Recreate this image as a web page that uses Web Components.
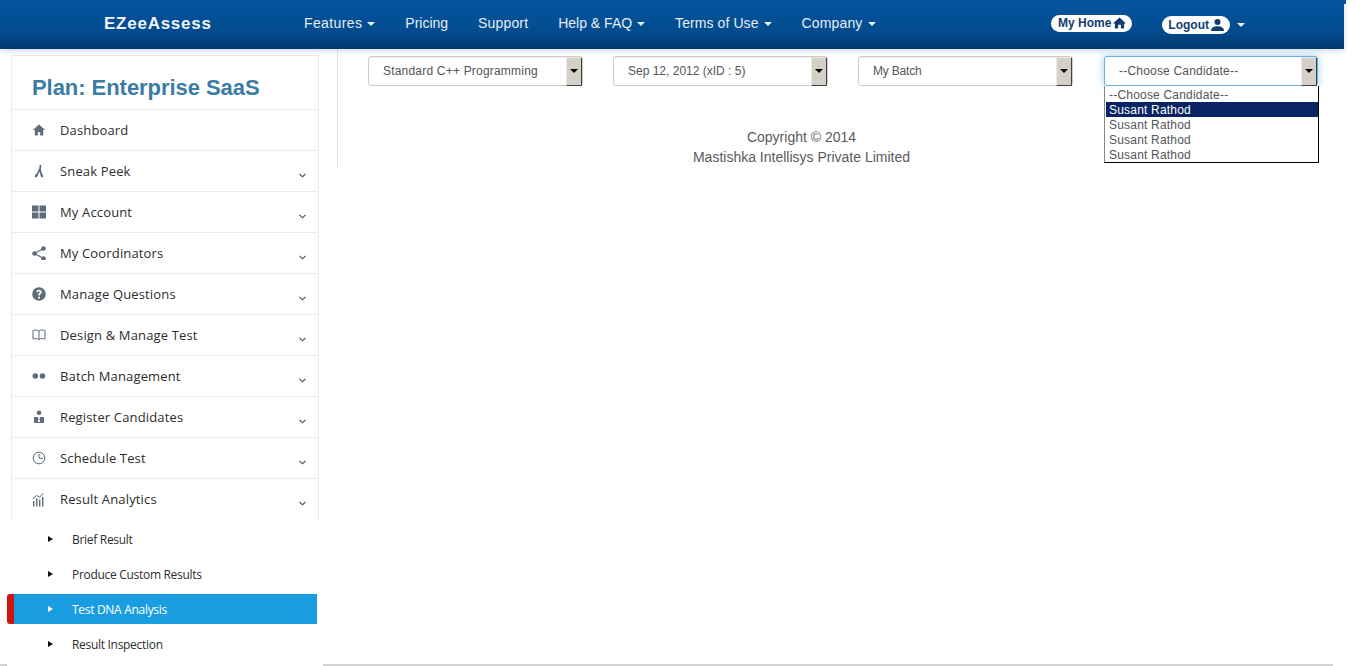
<!DOCTYPE html>
<html>
<head>
<meta charset="utf-8">
<title>EZeeAssess</title>
<style>
    html, body { margin: 0; height: 666px; overflow: hidden; background: #fff; }
    body { font-family: "Liberation Sans", Arial, sans-serif; }
    app-shell { height: 666px; }
</style>
</head>
<body>
<app-shell>
    <top-bar slot="top">
        <nav-link label="Features" caret style="letter-spacing: .38px"></nav-link>
        <nav-link label="Pricing"></nav-link>
        <nav-link label="Support" style="letter-spacing: .15px"></nav-link>
        <nav-link label="Help &amp; FAQ" caret></nav-link>
        <nav-link label="Terms of Use" caret style="letter-spacing: .08px"></nav-link>
        <nav-link label="Company" caret style="letter-spacing: .15px"></nav-link>
    </top-bar>
    <side-menu slot="side" title="Plan: Enterprise SaaS">
        <side-item icon="home" label="Dashboard" plain></side-item>
        <side-item icon="fork" label="Sneak Peek"></side-item>
        <side-item icon="grid" label="My Account"></side-item>
        <side-item icon="share" label="My Coordinators"></side-item>
        <side-item icon="help" label="Manage Questions"></side-item>
        <side-item icon="book" label="Design &amp; Manage Test"></side-item>
        <side-item icon="dots" label="Batch Management"></side-item>
        <side-item icon="person" label="Register Candidates"></side-item>
        <side-item icon="clock" label="Schedule Test"></side-item>
        <side-item icon="chart" label="Result Analytics" last></side-item>
        <sub-item slot="sub" label="Brief Result"></sub-item>
        <sub-item slot="sub" label="Produce Custom Results"></sub-item>
        <sub-item slot="sub" label="Test DNA Analysis" active></sub-item>
        <sub-item slot="sub" label="Result Inspection"></sub-item>
    </side-menu>
    <filter-bar slot="main">
        <pick-box value="Standard C++ Programming" style="letter-spacing: .2px"></pick-box>
        <pick-box value="Sep 12, 2012 (xID : 5)"></pick-box>
        <pick-box value="My Batch" style="letter-spacing: -.2px"></pick-box>
        <pick-box value="--Choose Candidate--" open selected="1" style="letter-spacing: .2px; width: 214px; margin-left: 1px">
            <span>--Choose Candidate--</span>
            <span>Susant Rathod</span>
            <span>Susant Rathod</span>
            <span>Susant Rathod</span>
            <span>Susant Rathod</span>
        </pick-box>
    </filter-bar>
    <copy-right slot="main"></copy-right>
</app-shell>

<script>
const ICONS = {
    home: '<path d="M7 1.500 .8 7h2v5.500h3V9h2.400v3.500h3V7h2z"/>',
    fork: '<path d="M8.600 1 8 5 4 12.800M8 5 9.800 12.800" fill="none" stroke="currentColor" stroke-width="1.700"/><path d="M3 13.200 3.300 10 5.500 10.800 5 13.200zM9 13.200 8.800 10 10.600 10 11 13.200z"/>',
    grid: '<path d="M0 .5h6.500v6H0zM7.500 .5H14v6H7.500zM0 7.500h6.500v6H0zM7.500 7.500H14v6H7.500z"/>',
    share: '<circle cx="11.500" cy="2.500" r="2.300"/><circle cx="2.500" cy="7.500" r="2.300"/><circle cx="11.500" cy="12.500" r="2.300"/><path d="M2.500 7.500 11.500 2.500M2.500 7.500 11.500 12.500" stroke="currentColor" stroke-width="1.200" fill="none"/>',
    help: '<path fill-rule="evenodd" d="M7 .2a6.800 6.800 0 1 0 0 13.600A6.800 6.800 0 0 0 7 .2zM6 9.700h2V11.500H6zM4.300 5.200C4.500 3.600 5.600 2.800 7.100 2.800c1.600 0 2.700 1 2.700 2.300 0 1.100-.6 1.600-1.300 2.100-.5.4-.7.600-.7 1.400H6c0-1.300.3-1.800 1-2.300.6-.5.900-.7.900-1.200 0-.5-.4-.8-.9-.8-.6 0-1 .3-1.100 1z"/>',
    book: '<path d="M7 3C5.500 1.800 3 1.800 1 2.500v8.500c2-.6 4.500-.6 6 .5 1.500-1.100 4-1.100 6-.5V2.500C11 1.800 8.500 1.800 7 3zm0 0v8.500" fill="none" stroke="currentColor" stroke-width="1"/>',
    dots: '<circle cx="3.300" cy="7" r="2.800"/><circle cx="10.500" cy="7" r="2.800"/>',
    person: '<circle cx="7" cy="2.800" r="2.300"/><path d="M2 13V7h3.500L6.500 8.500 6 12h2L7.500 8.500 8.500 7H12v6z"/>',
    clock: '<circle cx="7" cy="7" r="5.800" fill="none" stroke="currentColor" stroke-width="1"/><path d="M7 3V7.300H11" fill="none" stroke="currentColor" stroke-width="1"/>',
    chart: '<path d="M1 13.500V8H2.400V13.500zM4 13.500V5.500H5.400V13.500zM7 13.500V6.500H8.400V13.500zM10 13.500V4H11.400V13.500z"/><path d="M.8 6 4.500 2.500 7.500 4 11.500 .5" fill="none" stroke="currentColor" stroke-width="1"/>'
};

class AppShell extends HTMLElement {
    constructor() {
        super();
        this.attachShadow({ mode: "open" });
        this.shadowRoot.innerHTML = /* html */ `
            <style>
                :host { display: flex; flex-direction: column; }
                .body { flex: 1; display: flex; min-height: 0; }
                .side { flex: 0 0 323px; height: 617px; display: flex; flex-direction: column; }
                .stub { margin-top: auto; width: 7px; height: 2px; background: #d2d2d2; }
                .main { flex: 0 0 1010px; border-bottom: 2px solid #d2d2d2; box-sizing: border-box; height: 617px; padding-left: 14px; }
                .inner { border-left: 1px solid #e2e2e2; height: 118px; }
            </style>
            <slot name="top"></slot>
            <div class="body">
                <div class="side"><slot name="side"></slot><div class="stub"></div></div>
                <div class="main"><div class="inner"><slot name="main"></slot></div></div>
            </div>
        `;
    }
}

class TopBar extends HTMLElement {
    constructor() {
        super();
        this.attachShadow({ mode: "open" });
        this.shadowRoot.innerHTML = /* html */ `
            <style>
                :host { display: block; height: 49px; position: relative; }
                :host::after {
                    content: "";
                    position: absolute;
                    left: 1344px; top: 0;
                    width: 2px; height: 4px;
                    background: #04549f;
                }
                .bar {
                    width: 1344px;
                    height: 49px;
                    box-sizing: border-box;
                    display: flex;
                    align-items: center;
                    background: linear-gradient(to bottom, #04559f 0, #034b8e 65%, #033a72 100%);
                    box-shadow: 0 2px 5px rgba(40, 90, 150, 0.22);
                    padding-left: 104px;
                }
                .brand {
                    font: bold 17px "Liberation Sans", Arial, sans-serif;
                    letter-spacing: 0.75px;
                    color: #f1f5fa;
                    width: 200px;
                    padding-bottom: 1px;
                }
                .links { display: flex; gap: 30px; padding-bottom: 4px; }
                .right { margin-left: auto; display: flex; align-items: center; padding-right: 99px; }
                .pill {
                    display: flex;
                    align-items: center;
                    gap: 2px;
                    background: #fff;
                    color: #123e6f;
                    border-radius: 9px;
                    font: bold 12px "Liberation Sans", Arial, sans-serif;
                    padding: 0 6px 0 7px;
                    height: 17px;
                }
                .home { margin: -3px 30px 0 0; }
                .logout { height: 18px; padding: 0 5px 0 6px; gap: 1px; }
                .caret {
                    width: 0; height: 0; margin-left: 7px;
                    border: 4.500px solid transparent;
                    border-top-color: #eaf0f7;
                    border-bottom: 0;
                }
                svg { display: block; }
            </style>
            <div class="bar">
                <div class="brand">EZeeAssess</div>
                <div class="links"><slot></slot></div>
                <div class="right">
                    <div class="pill home">My Home
                        <svg width="13" height="12" viewBox="0 0 14 13" fill="#123e6f"><path d="M7 .5 0 7h2v5.500h3.500V8.500h3v4H12V7h2z"/></svg>
                    </div>
                    <div class="pill logout">Logout
                        <svg width="15" height="12" viewBox="0 0 15 12" fill="#123e6f"><circle cx="7.500" cy="3" r="3"/><path d="M1 12c0-3.500 3-4.800 6.500-4.800S14 8.500 14 12z"/></svg>
                    </div>
                    <div class="caret"></div>
                </div>
            </div>
        `;
    }
}

class NavLink extends HTMLElement {
    constructor() {
        super();
        this.attachShadow({ mode: "open" });
        const caret = this.hasAttribute("caret") ? '<i></i>' : '';
        this.shadowRoot.innerHTML = /* html */ `
            <style>
                :host { display: block; font: 14px "Liberation Sans", Arial, sans-serif; color: #e6edf5; }
                div { display: flex; align-items: center; gap: 5px; }
                i { width: 0; height: 0; border: 4.500px solid transparent; border-top-color: #e6edf5; border-bottom: 0; margin-top: 2px; }
            </style>
            <div>${this.getAttribute("label")}${caret}</div>
        `;
    }
}

class SideMenu extends HTMLElement {
    constructor() {
        super();
        this.attachShadow({ mode: "open" });
        this.shadowRoot.innerHTML = /* html */ `
            <style>
                :host { display: block; width: 323px; padding-top: 6px; }
                .card { margin-left: 11px; width: 308px; box-sizing: border-box; border: 1px solid #ebebeb; border-bottom: 0; height: 465px; overflow: hidden; }
                h1 {
                    margin: 0;
                    height: 54px;
                    box-sizing: border-box;
                    padding: 19px 0 0 20px;
                    font: bold 22px "Liberation Sans", Arial, sans-serif;
                    letter-spacing: -0.05px;
                    color: #3a7ca5;
                    line-height: 26px;
                    border-bottom: 1px solid #ebebeb;
                }
                .sub { padding-top: 2px; display: flex; flex-direction: column; }
            </style>
            <div class="card">
                <h1>${this.getAttribute("title")}</h1>
                <slot></slot>
            </div>
            <div class="sub"><slot name="sub"></slot></div>
        `;
    }
}

class SideItem extends HTMLElement {
    constructor() {
        super();
        this.attachShadow({ mode: "open" });
        const chev = this.hasAttribute("plain") ? '' :
            '<svg class="chev" width="7" height="5" viewBox="0 0 7 5"><path d="M.5.8 3.500 3.800 6.500.8" fill="none" stroke="#4a4a4a" stroke-width="1.100"/></svg>';
        this.shadowRoot.innerHTML = /* html */ `
            <style>
                :host {
                    display: flex;
                    align-items: center;
                    height: 41px;
                    box-sizing: border-box;
                    border-bottom: 1px solid #ebebeb;
                    padding: 0 12px 0 20px;
                    font: 13px "Open Sans", sans-serif;
                    letter-spacing: 0.15px;
                    color: #2d2d2d;
                }
                :host([last]) { border-bottom: 0; }
                svg.ic { flex: none; color: #5f6b7b; fill: #5f6b7b; margin-right: 14px; }
                .chev { margin-left: auto; margin-top: 8px; }
                span { padding-bottom: 1px; }
            </style>
            <svg class="ic" width="14" height="14" viewBox="0 0 14 14">${ICONS[this.getAttribute("icon")]}</svg>
            <span>${this.getAttribute("label")}</span>
            ${chev}
        `;
    }
}

class SubItem extends HTMLElement {
    constructor() {
        super();
        this.attachShadow({ mode: "open" });
        this.shadowRoot.innerHTML = /* html */ `
            <style>
                :host {
                    display: flex;
                    align-items: center;
                    height: 30px;
                    margin: 2px 6px 3px 14px;
                    padding-left: 34px;
                    font: 12px "Open Sans", sans-serif;
                    letter-spacing: -0.3px;
                    color: #2d2d2d;
                    position: relative;
                }
                :host([active]) { background: #1a9de0; color: #fff; }
                :host([active])::before {
                    content: "";
                    position: absolute;
                    left: -7px; top: 0; bottom: 0; width: 7px;
                    background: #d0140c;
                    border-radius: 3px 0 0 3px;
                }
                i { width: 0; height: 0; border: 3px solid transparent; border-left: 5px solid currentColor; border-right: 0; margin-right: 19px; }
                :host(:not([active])) i { color: #111; }
            </style>
            <i></i><span>${this.getAttribute("label")}</span>
        `;
    }
}

class FilterBar extends HTMLElement {
    constructor() {
        super();
        this.attachShadow({ mode: "open" });
        this.shadowRoot.innerHTML = /* html */ `
            <style>
                :host { display: flex; gap: 30px; padding: 7px 0 0 30px; height: 31px; }
            </style>
            <slot></slot>
        `;
    }
}

class PickBox extends HTMLElement {
    constructor() {
        super();
        this.attachShadow({ mode: "open" });
        this.shadowRoot.innerHTML = /* html */ `
            <style>
                :host {
                    display: block;
                    position: relative;
                    width: 215px;
                    height: 30px;
                    font: 12px "Liberation Sans", Arial, sans-serif;
                    color: #555;
                }
                .box {
                    height: 30px;
                    box-sizing: border-box;
                    display: flex;
                    align-items: center;
                    justify-content: space-between;
                    padding-left: 14px;
                    background: #fff;
                    border: 1px solid #ccc;
                    border-radius: 3px;
                    box-shadow: inset 0 1px 1px rgba(0,0,0,.08);
                }
                :host([open]) .box { border-color: #66afe9; box-shadow: 0 0 8px rgba(102,175,233,.6); }
                .arrow {
                    width: 16px;
                    height: 29px;
                    flex: none;
                    box-sizing: border-box;
                    background: #d4d0c8;
                    border: 1px solid;
                    border-color: #eeeae2 #404040 #404040 #eeeae2;
                    display: flex;
                    align-items: center;
                    justify-content: center;
                    border-radius: 0 1px 1px 0;
                }
                .arrow i { width: 0; height: 0; border: 4px solid transparent; border-top-color: #000; border-bottom: 0; }
                .list {
                    position: absolute;
                    left: 0; right: -1px; top: 30px;
                    box-sizing: border-box;
                    background: #fff;
                    border: 1px solid #000;
                    border-top: 0;
                    border-left-color: #888;
                    padding: 1px 0 0 1px;
                    display: none;
                    z-index: 2;
                }
                :host([open]) .list { display: block; }
                ::slotted(span) {
                    display: block;
                    height: 15px;
                    line-height: 17px;
                    padding-left: 3px;
                    color: #555;
                }
                ::slotted(span.on) { background: #0a2463; color: #fff; }
            </style>
            <div class="box"><span>${this.getAttribute("value")}</span><div class="arrow"><i></i></div></div>
            <div class="list"><slot></slot></div>
        `;
        const sel = this.getAttribute("selected");
        if (sel !== null) this.children[+sel].classList.add("on");
    }
}

class CopyRight extends HTMLElement {
    constructor() {
        super();
        this.attachShadow({ mode: "open" });
        this.shadowRoot.innerHTML = /* html */ `
            <style>
                :host {
                    display: block;
                    text-align: center;
                    font: 14px/20px "Liberation Sans", Arial, sans-serif;
                    color: #5a5a5a;
                    width: 927px;
                    padding-top: 40px;
                }
            </style>
            Copyright © 2014<br>Mastishka Intellisys Private Limited
        `;
    }
}

customElements.define("app-shell", AppShell);
customElements.define("top-bar", TopBar);
customElements.define("nav-link", NavLink);
customElements.define("side-menu", SideMenu);
customElements.define("side-item", SideItem);
customElements.define("sub-item", SubItem);
customElements.define("filter-bar", FilterBar);
customElements.define("pick-box", PickBox);
customElements.define("copy-right", CopyRight);
</script>
</body>
</html>
